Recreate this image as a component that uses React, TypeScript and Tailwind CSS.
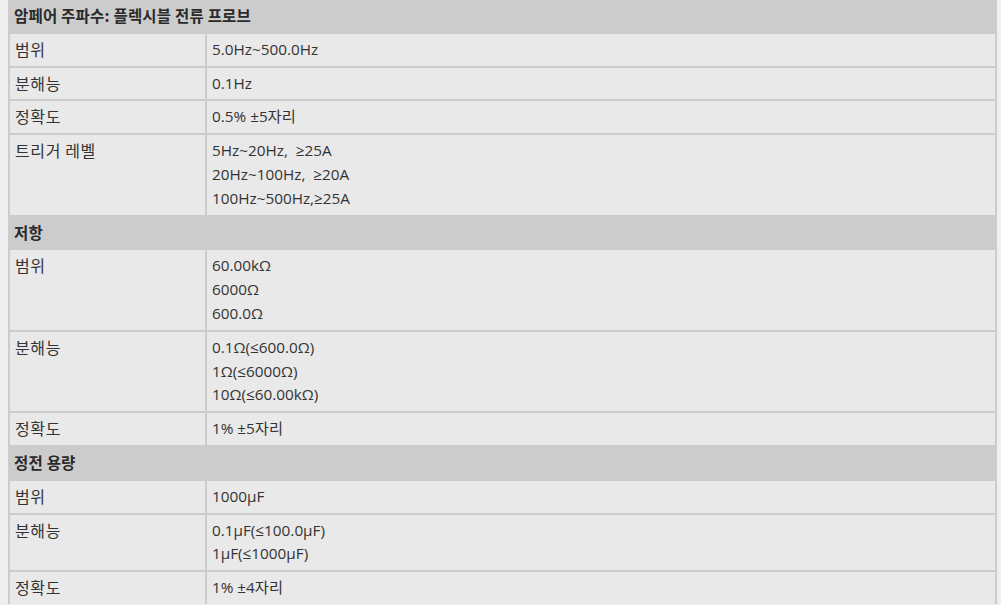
type Row = { label: string; values: string[] };
type Section = { title: string; rows: Row[] };

const sections: Section[] = [
  {
    title: "암페어 주파수: 플렉시블 전류 프로브",
    rows: [
      { label: "범위", values: ["5.0Hz~500.0Hz"] },
      { label: "분해능", values: ["0.1Hz"] },
      { label: "정확도", values: ["0.5% ±5자리"] },
      {
        label: "트리거 레벨",
        values: ["5Hz~20Hz,  ≥25A", "20Hz~100Hz,  ≥20A", "100Hz~500Hz,≥25A"],
      },
    ],
  },
  {
    title: "저항",
    rows: [
      { label: "범위", values: ["60.00kΩ", "6000Ω", "600.0Ω"] },
      {
        label: "분해능",
        values: ["0.1Ω(≤600.0Ω)", "1Ω(≤6000Ω)", "10Ω(≤60.00kΩ)"],
      },
      { label: "정확도", values: ["1% ±5자리"] },
    ],
  },
  {
    title: "정전 용량",
    rows: [
      { label: "범위", values: ["1000μF"] },
      { label: "분해능", values: ["0.1μF(≤100.0μF)", "1μF(≤1000μF)"] },
      { label: "정확도", values: ["1% ±4자리"] },
    ],
  },
];

const kr = { fontFamily: '"Noto Sans CJK KR", sans-serif' };

export default function App() {
  return (
    <div
      className="w-[1001px] h-[605px] overflow-hidden bg-[#efefef] pl-[8px] pr-[4px] text-[15.3px] leading-[23.8px] text-[#333333]"
      style={{ fontFamily: '"Open Sans", "Noto Sans CJK KR", sans-serif' }}
    >
      <div className="flex flex-col gap-[2px] bg-[#cccccc] px-[2px]">
        {sections.map((section) => (
          <div key={section.title} className="flex flex-col gap-[2px]">
            {/* section header spans both columns */}
            <div
              className="px-[4px] py-[4px] text-[15.5px] font-bold tracking-[0.2px] text-[#2a2a2a]"
              style={kr}
            >
              {section.title}
            </div>
            {section.rows.map((row) => (
              <div key={section.title + row.label} className="flex gap-[2px]">
                <div
                  className="w-[195px] shrink-0 bg-[#e9e9e9] px-[5px] py-[4px] text-[16px] tracking-[0.6px]"
                  style={kr}
                >
                  {row.label}
                </div>
                <div className="flex-1 bg-[#e9e9e9] px-[5px] py-[4px] whitespace-pre">
                  {row.values.map((v) => (
                    <div key={v}>{v}</div>
                  ))}
                </div>
              </div>
            ))}
          </div>
        ))}
      </div>
    </div>
  );
}
